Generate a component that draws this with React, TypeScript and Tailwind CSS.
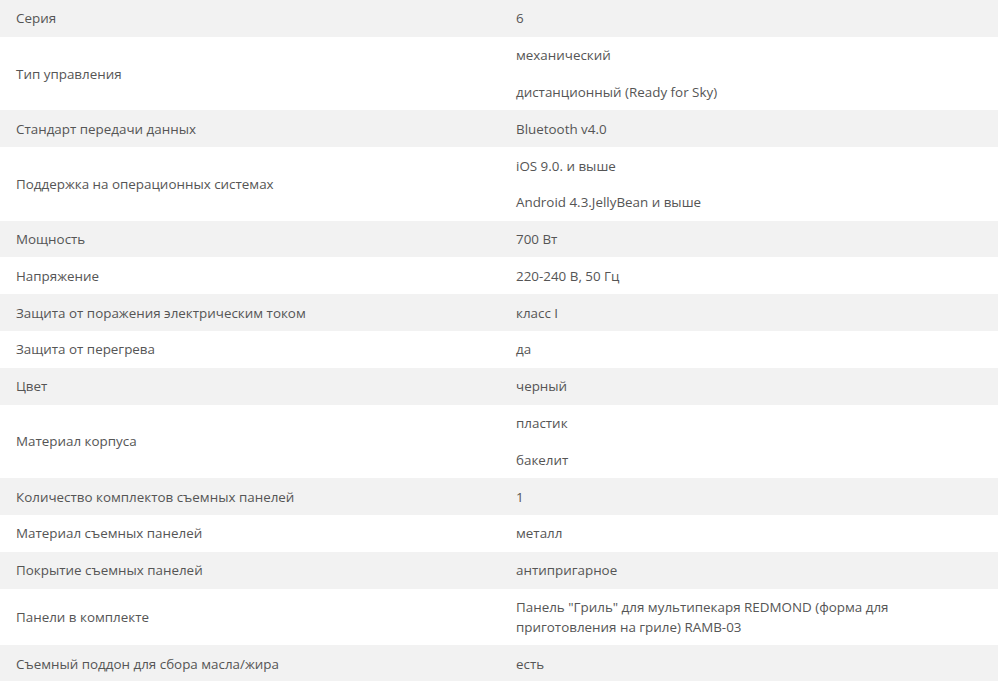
import React from "react";

const rows: { label: string; values: string[] }[] = [
  { label: "Серия", values: ["6"] },
  { label: "Тип управления", values: ["механический", "дистанционный (Ready for Sky)"] },
  { label: "Стандарт передачи данных", values: ["Bluetooth v4.0"] },
  { label: "Поддержка на операционных системах", values: ["iOS 9.0. и выше", "Android 4.3.JellyBean и выше"] },
  { label: "Мощность", values: ["700 Вт"] },
  { label: "Напряжение", values: ["220-240 В, 50 Гц"] },
  { label: "Защита от поражения электрическим током", values: ["класс I"] },
  { label: "Защита от перегрева", values: ["да"] },
  { label: "Цвет", values: ["черный"] },
  { label: "Материал корпуса", values: ["пластик", "бакелит"] },
  { label: "Количество комплектов съемных панелей", values: ["1"] },
  { label: "Материал съемных панелей", values: ["металл"] },
  { label: "Покрытие съемных панелей", values: ["антипригарное"] },
  {
    label: "Панели в комплекте",
    values: ['Панель "Гриль" для мультипекаря REDMOND (форма для приготовления на гриле) RAMB-03'],
  },
  { label: "Съемный поддон для сбора масла/жира", values: ["есть"] },
];

export default function App() {
  return (
    <div
      className="w-[998px] bg-white text-[13.4px] leading-[20px] text-[#555]"
      style={{ fontFamily: '"Open Sans", "Noto Sans", sans-serif' }}
    >
      {rows.map((r, i) => (
        <div key={i} className={`flex ${i % 2 === 0 ? "bg-[#f2f2f2]" : "bg-white"}`}>
          <div className="w-[500px] flex items-center px-4">{r.label}</div>
          <div className="flex-1 flex flex-col">
            {r.values.map((v, j) => (
              <div key={j} className="py-[8.4px] pl-4 pr-4 max-w-[420px]">
                {v}
              </div>
            ))}
          </div>
        </div>
      ))}
    </div>
  );
}
